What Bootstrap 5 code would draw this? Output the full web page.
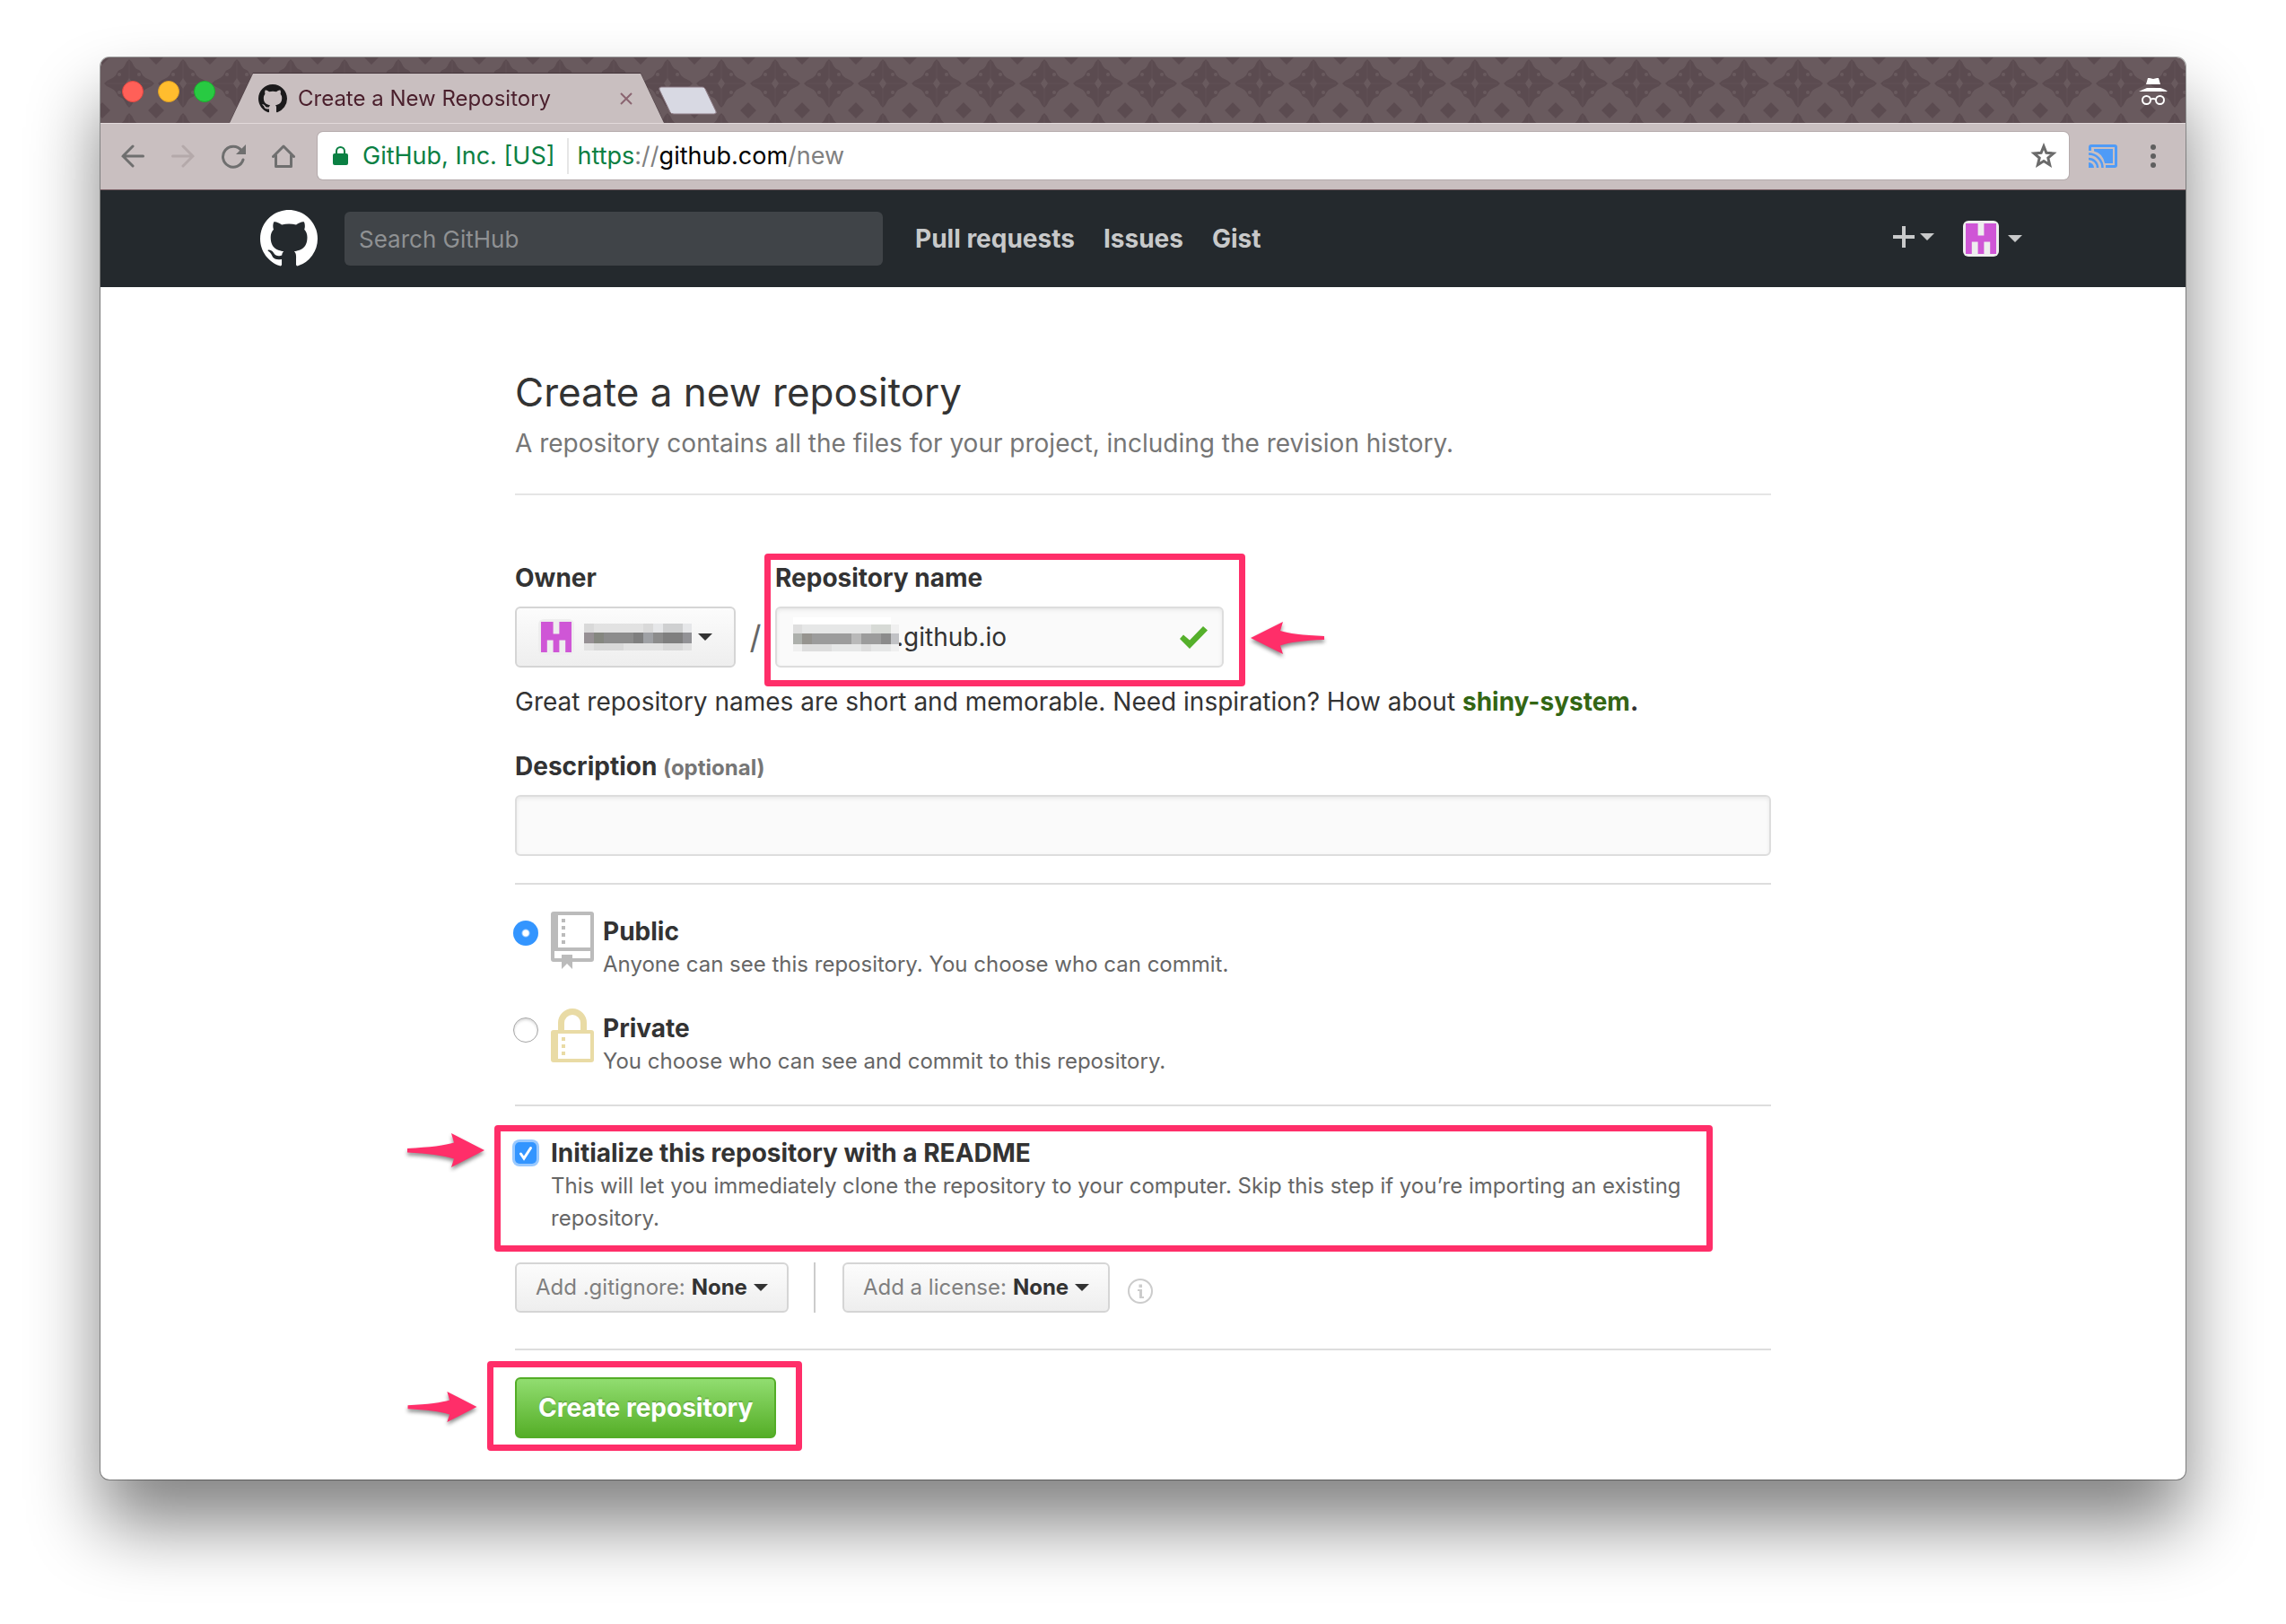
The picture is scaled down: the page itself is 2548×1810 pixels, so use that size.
<!DOCTYPE html>
<html lang="en">
<head>
<meta charset="utf-8">
<meta name="viewport" content="width=device-width, initial-scale=1">
<title>Create a New Repository</title>
<link href="https://cdn.jsdelivr.net/npm/bootstrap@5.3.0/dist/css/bootstrap.min.css" rel="stylesheet">
<style>
  :root { --pink: #ff2e69; --ink: #333; --chrome: #c9bfc0; }
  body { font-family: Inter, "Liberation Sans", sans-serif; font-size: 28px; line-height: 42px; color: var(--ink); background: #fff; }
  svg { display: block; flex: none; }
  .desktop { padding: 64px 112px 100px; }

  /* browser window */
  .window { border-radius: 10px; overflow: hidden; background: #fff; box-shadow: 0 0 0 1px rgba(0,0,0,.35), 0 50px 80px rgba(0,0,0,.49); }
  .titlebar { height: 73px; padding: 0 20px 0 24px; background: #695a5e; }
  .theme { z-index: 0; }
  .titlebar > :not(.theme) { position: relative; }
  .lights { gap: 16px; margin-bottom: 23px; }
  .light { width: 24px; height: 24px; padding: 0; border-radius: 50%; border: 1px solid; }
  .light-close { background: #ff6058; border-color: #e14640; }
  .light-min { background: #ffbd2e; border-color: #dfa023; }
  .light-max { background: #28ca42; border-color: #1bac2c; }
  .tab-shell { width: 484px; margin-left: 16px; filter: drop-shadow(0 -1px 0 #43343a); }
  .tab-face { height: 55px; padding: 0 35px 0 32px; gap: 12px; background: var(--chrome); clip-path: polygon(26px 0, calc(100% - 26px) 0, 100% 100%, 0 100%); font-size: 24px; color: #4a1f2c; }
  .new-tab { margin: 0 0 9px -6px; }
  .incognito { margin-bottom: 20px; }
  .bare { padding: 0; border: 0; background: none; color: inherit; }
  .toolbar { padding: 9px 33px 11px 23px; gap: 30px; background: var(--chrome); border-top: 1px solid #e2dadb; border-bottom: 1px solid #7d6168; color: #6b6b6b; }
  .omnibox { height: 53px; margin: 0 -8px 0 -5px; padding: 0 13px 0 17px; background: #fff; border-radius: 6px; box-shadow: 0 0 0 1px #b5abac; color: #808080; font-size: 27px; }
  .secure { color: #0b8043; }
  .omni-rule { width: 2px; height: 40px; margin: 0 10px 0 13px; background: #e6e6e6; }
  .menu-dots { padding-left: 7px; }

  /* site header */
  .site-header { background: #24292d; height: 108px; color: #c8c9ca; }
  .site-inner { max-width: 1968px; padding-right: 4px; }
  .search-box { width: 600px; height: 60px; margin-left: 30px; padding: 0 16px; border: 0; border-radius: 6px; background: #404448; color: #fff; font-size: 26px; }
  .search-box::placeholder { color: #8f9193; opacity: 1; }
  .site-nav { margin-left: 36px; gap: 32px; }
  .site-nav a { color: #c8c9ca; font-weight: 700; text-decoration: none; }
  .tri { width: 0; height: 0; border: 8px solid transparent; border-top-color: currentColor; border-bottom: 0; }
  .add-menu { gap: 6px; }
  .profile-menu { gap: 10px; margin-left: 32px; }

  /* form */
  .sheet { max-width: 1400px; padding: 92px 0 46px; }
  h1 { font-size: 44px; line-height: 50px; font-weight: 400; margin: 0 0 11px; }
  .sub { color: #767676; }
  .rule { margin: 30px 0; border: 0; border-top: 2px solid #ddd; opacity: 1; }
  .rule-head { margin: 35px 0 71px; border-top-color: #e5e5e5; }
  .rule-last { margin-top: 40px; }
  .caption { display: block; font-weight: 700; }
  .caption + * { margin-top: 11px; }
  .optional { font-size: 24px; line-height: 24px; }
  .hint { margin: 17px 0 30px; }
  .hint a { color: #336614; text-decoration: none; }
  .field { height: 68px; border: 2px solid #ddd; border-radius: 6px; background: #fafafa; box-shadow: inset 0 2px 4px rgba(0,0,0,.075); font-size: 28px; color: var(--ink); }
  .repo-name { width: 500px; }
  .repo-name .field { padding: 0 70px 0 133px; }
  .mask { left: 20px; top: 12px; }
  .valid { right: 18px; top: 22px; }
  .soft-btn { height: 56px; padding: 0 21px; border: 2px solid #d5d5d5; border-radius: 6px; background: linear-gradient(#fcfcfc, #eee); color: var(--ink); font-size: 24px; gap: 7px; }
  .soft-btn .key { color: #7f7f7f; }
  .owner-btn { height: 68px; padding: 0 24px; }
  .owner-mask { margin-left: 4px; }
  .avatar { border-radius: 6px; background: #eee; }
  .slash { width: 44px; height: 68px; line-height: 68px; font-size: 36px; color: #666; text-align: center; }
  .choice { line-height: 38px; }
  .choice + .choice, .extras { margin-top: 31px; }
  .choice-text { padding-top: 3px; }
  .choice .note { margin: 0; font-size: 24px; line-height: 36px; color: #666; }
  .pick { appearance: none; flex: none; margin: 10px 0 0; }
  .pick-radio { width: 28px; height: 28px; margin-left: -2px; border-radius: 50%; border: 1px solid #a5a5a5; background: #fff; box-shadow: inset 0 2px 3px rgba(0,0,0,.15); }
  .pick-radio:checked { border: 0; background: radial-gradient(circle, #fff 3px, #3395ff 5px); box-shadow: none; }
  .pick-check { width: 24px; height: 24px; border-radius: 5px; background: #3395ff; box-shadow: 0 0 0 3px #99c9ff; }
  .choice-icon { margin: 0 10px 0 14px; width: 48px; height: 64px; }
  .split { width: 2px; height: 56px; margin: 0 30px 0 28px; background: #ccc; }
  .info { margin: 8px 0 0 20px; }
  .go-btn { height: 68px; padding: 0 24px; border: 2px solid #53ad27; border-radius: 6px; background: linear-gradient(#91dd70, #55ae27); color: #fff; font-weight: 700; text-shadow: 0 -2px 0 rgba(0,0,0,.15); }

  /* walkthrough marks laid over the form */
  .frame { border: 7px solid var(--pink); border-radius: 4px; pointer-events: none; }
  .frame-name { inset: -6px -24px -21px -12px; margin: 0; }
  .frame-readme { inset: -9px 65px -19px -23px; }
  .frame-go { inset: -18px -29px -14px -31px; }
  .arrow { fill: var(--pink); filter: drop-shadow(0 3px 2px rgba(0,0,0,.45)); }
  .arrow-name { left: calc(100% + 30px); bottom: 15px; }
  .arrow-readme { left: -120px; top: 0; }
  .arrow-go { left: -120px; top: 16px; }
</style>
<script src="https://cdn.jsdelivr.net/npm/bootstrap@5.3.0/dist/js/bootstrap.bundle.min.js"></script>
</head>
<body>
<svg class="d-none" aria-hidden="true">
  <symbol id="octocat" viewBox="0 0 16 16"><path d="M8 0C3.58 0 0 3.58 0 8c0 3.54 2.29 6.53 5.47 7.59.4.07.55-.17.55-.38 0-.19-.01-.82-.01-1.49-2.01.37-2.53-.49-2.69-.94-.09-.23-.48-.94-.82-1.13-.28-.15-.68-.52-.01-.53.63-.01 1.08.58 1.23.82.72 1.21 1.87.87 2.33.66.07-.52.28-.87.51-1.07-1.78-.2-3.64-.89-3.64-3.95 0-.87.31-1.59.82-2.15-.08-.2-.36-1.02.08-2.12 0 0 .67-.21 2.2.82.64-.18 1.32-.27 2-.27.68 0 1.36.09 2 .27 1.53-1.04 2.2-.82 2.2-.82.44 1.1.16 1.92.08 2.12.51.56.82 1.27.82 2.15 0 3.07-1.87 3.75-3.65 3.95.29.25.54.73.54 1.48 0 1.07-.01 1.93-.01 2.2 0 .21.15.46.55.38A8.013 8.013 0 0 0 16 8c0-4.42-3.58-8-8-8z"/></symbol>
  <symbol id="identicon" viewBox="-3 -3 40 40"><path fill="#cf56d6" transform="scale(6.8)" d="M0 0h2v2h1V0h2v5H4V3H3v2H2V3H1v2H0z"/></symbol>
  <symbol id="arrow-right" viewBox="0 0 86 38"><path d="M86 19 49 0 52 10.500Q38 15 0 17V21.500Q34 23 52 28.500L49 38Z"/></symbol>
</svg>

<div class="desktop min-vh-100">
  <div class="window">
    <div class="titlebar d-flex align-items-end position-relative">
      <svg class="theme position-absolute top-0 start-0 w-100 h-100" aria-hidden="true">
        <defs><pattern id="tile" width="60" height="60" patternUnits="userSpaceOnUse" patternTransform="translate(2 -1)">
          <path fill="#5b4b50" d="M30 3Q33 5 35 10 37 14 41 15 43 16 44 19 46 23 51 25 56 27 58 30 56 33 51 35 46 37 44 41 43 44 41 45 37 46 35 50 33 55 30 57 27 55 25 50 23 46 19 45 17 44 16 41 14 37 9 35 4 33 2 30 4 27 9 25 14 23 16 19 17 16 19 15 23 14 25 10 27 5 30 3ZM0-9 9 0 0 9-9 0ZM60-9 69 0 60 9 51 0ZM0 51 9 60 0 69-9 60ZM60 51 69 60 60 69 51 60Z"/>
          <path fill="none" stroke="#615156" d="M30 5V55M5 30H55"/>
          <path fill="#695a5e" d="M30 24 34 30 30 36 26 30Z"/>
          <g fill="#695a5e"><circle cx="19" cy="20" r="2"/><circle cx="41" cy="20" r="2"/><circle cx="19" cy="40" r="2"/><circle cx="41" cy="40" r="2"/></g>
        </pattern></defs>
        <rect width="100%" height="100%" fill="url(#tile)"/>
      </svg>
      <div class="lights d-flex">
        <button class="light light-close" aria-label="Close window"></button>
        <button class="light light-min" aria-label="Minimise window"></button>
        <button class="light light-max" aria-label="Zoom window"></button>
      </div>
      <div class="tab-shell">
        <div class="tab-face d-flex align-items-center">
          <svg width="32" height="32" fill="#1b1a1b"><use href="#octocat"/></svg>
          <span>Create a New Repository</span>
          <button class="bare ms-auto" aria-label="Close tab"><svg width="14" height="14" fill="none" stroke="#8a6470" stroke-width="2"><path d="M1 1 13 13M13 1 1 13"/></svg></button>
        </div>
      </div>
      <button class="bare new-tab" aria-label="New tab"><svg width="66" height="32"><path fill="#d8d9e3" stroke="#8d7b84" d="M3 1H49Q51 1 52 3L64 28Q65 31 62 31H17Q14 31 13 29L1 4Q0 1 3 1Z"/></svg></button>
      <svg class="incognito ms-auto" width="32" height="30" viewBox="0 0 32 30" fill="#fff"><path d="M10 0H12L16 1 20 0H22L24 7H8ZM9 11H24Q30 13 32 15H0Q4 13 9 11Z"/><g fill="none" stroke="#fff" stroke-width="2"><circle cx="8.500" cy="24.500" r="4.500"/><circle cx="23.500" cy="24.500" r="4.500"/><path d="M13 24Q16 22 19 24"/></g></svg>
    </div>

    <div class="toolbar d-flex align-items-center">
      <button class="bare" aria-label="Back"><svg width="26" height="26" fill="none" stroke="#6f6f6f" stroke-width="3" stroke-linecap="round"><path d="M24.500 13H2M13 2 2 13 13 24"/></svg></button>
      <button class="bare" aria-label="Forward"><svg width="26" height="26" fill="none" stroke="#b4a9aa" stroke-width="3" stroke-linecap="round"><path d="M1.500 13H24M13 2 24 13 13 24"/></svg></button>
      <button class="bare" aria-label="Reload"><svg class="overflow-visible" width="26" height="26" fill="none" stroke="#6f6f6f" stroke-width="3"><path d="M22 6.500A11.500 11.500 0 1 0 24 17" stroke-linecap="round"/><path fill="#6f6f6f" stroke="none" d="M27 0V11H16Z"/></svg></button>
      <button class="bare" aria-label="Home"><svg width="26" height="26" fill="none" stroke="#6f6f6f" stroke-width="3"><path d="M1.500 13.500 13 2 24.500 13.500M4.500 12V24.500H21.500V12" stroke-linecap="round" stroke-linejoin="round"/></svg></button>
      <div class="omnibox d-flex align-items-center flex-grow-1">
        <svg width="17" height="21" viewBox="0 0 17 21"><rect y="8" width="17" height="13" rx="2" fill="#0b8043"/><path d="M4 9V5.500a4.500 4.500 0 0 1 9 0V9" fill="none" stroke="#0b8043" stroke-width="2"/></svg>
        <span class="secure ms-3">GitHub, Inc. [US]</span>
        <span class="omni-rule"></span>
        <span role="textbox" aria-label="Address"><span class="secure">https</span>://<span class="text-black">github.com</span>/new</span>
        <button class="bare ms-auto" aria-label="Bookmark this page"><svg width="30" height="30" viewBox="0 0 30 30" fill="none" stroke="#6b6b6b" stroke-width="3"><path d="M15 4 17.900 11.300 25.800 11.900 19.800 17 21.700 24.700 15 20.500 8.300 24.700 10.200 17 4.200 11.900 12.100 11.300Z"/></svg></button>
      </div>
      <svg width="32" height="26" viewBox="0 0 32 26" fill="#4f9bf7" role="img" aria-label="Cast"><path d="M3 0H29Q32 0 32 3V23Q32 26 29 26H19V23H29V3H3V7H0V3Q0 0 3 0Z"/><path d="M6 5H27V21H18Q16 10 6 7.500Z"/><path fill="none" stroke="#4f9bf7" stroke-width="2.500" d="M0 10.500A15.500 15.500 0 0 1 15.500 26M0 16A10 10 0 0 1 10 26"/><path d="M0 20A6 6 0 0 1 6 26H0Z"/></svg>
      <button class="bare menu-dots" aria-label="Menu"><svg width="6" height="26" fill="#5f5f5f"><circle cx="3" cy="3" r="3"/><circle cx="3" cy="13" r="3"/><circle cx="3" cy="23" r="3"/></svg></button>
    </div>

    <header class="site-header d-flex">
      <div class="site-inner d-flex align-items-center w-100 mx-auto">
        <a href="#" aria-label="Homepage"><svg width="64" height="64" fill="#fff"><use href="#octocat"/></svg></a>
        <input class="search-box" type="search" placeholder="Search GitHub" aria-label="Search GitHub">
        <nav class="site-nav d-flex">
          <a href="#">Pull requests</a>
          <a href="#">Issues</a>
          <a href="#">Gist</a>
        </nav>
        <button class="bare add-menu ms-auto d-flex align-items-center pb-1" aria-label="Create new"><svg width="24" height="24" stroke="#c8c9ca" stroke-width="4"><path d="M0 12H24M12 0V24"/></svg><span class="tri"></span></button>
        <button class="bare profile-menu d-flex align-items-center" aria-label="Profile"><svg class="avatar" width="40" height="40"><use href="#identicon"/></svg><span class="tri"></span></button>
      </div>
    </header>

    <main class="sheet mx-auto">
      <h1>Create a new repository</h1>
      <p class="sub m-0">A repository contains all the files for your project, including the revision history.</p>
      <hr class="rule rule-head">

      <form>
        <div class="d-flex align-items-end">
          <div>
            <label class="caption" for="owner">Owner</label>
            <button class="soft-btn owner-btn d-flex align-items-center" type="button" id="owner">
              <svg class="avatar" width="40" height="40"><use href="#identicon"/></svg>
              <svg class="owner-mask" width="120" height="30" viewBox="0 0 120 30" shape-rendering="crispEdges" aria-hidden="true">
                <path fill="#e2e2e2" d="M0 0H120V30H0Z"/>
                <path fill="#d9d9d9" d="M0 0H11V10H0ZM66 0H77V10H66ZM11 22H44V30H11ZM88 22H110V30H88Z"/>
                <path fill="#cfd0d1" d="M88 0H110V10H88Z"/><path fill="#e6e7e9" d="M77 0H88V10H77ZM110 0H120V10H110Z"/>
                <path fill="#8c8c8c" d="M0 10H120V22H0Z"/><path fill="#969094" d="M0 10H11V22H0Z"/><path fill="#858780" d="M11 10H22V22H11Z"/><path fill="#7f7f7f" d="M55 10H66V22H55ZM88 10H110V22H88Z"/><path fill="#9fa1a5" d="M66 10H77V22H66Z"/><path fill="#929296" d="M110 10H120V22H110Z"/>
              </svg>
              <span class="tri"></span>
            </button>
          </div>
          <div class="slash">/</div>
          <div class="repo-name position-relative">
            <label class="caption" for="repo">Repository name</label>
            <div class="position-relative">
              <input class="field d-block w-100" id="repo" type="text" value=".github.io">
              <svg class="mask position-absolute" width="118" height="38" viewBox="0 0 118 38" shape-rendering="crispEdges" aria-hidden="true">
                <path fill="#fff" d="M0 0H109V8H0Z"/><path fill="#e6e7e7" d="M0 8H109V38H0Z"/>
                <path fill="#dedede" d="M0 8H10V18H0ZM10 30H43V38H10ZM76 30H87V38H76Z"/><path fill="#d7dad6" d="M87 8H109V18H87Z"/>
                <path fill="#f0f0f0" d="M0 30H10V38H0ZM109 8H118V38H109Z"/>
                <path fill="#9c9c9c" d="M0 18H109V30H0Z"/><path fill="#adb0ac" d="M0 18H10V30H0Z"/><path fill="#96948f" d="M10 18H21V30H10Z"/><path fill="#b9b9b9" d="M65 18H76V30H65Z"/><path fill="#8b8b8b" d="M98 18H109V30H98Z"/><path fill="#c1c2c5" d="M109 18H118V30H109Z"/>
              </svg>
              <svg class="valid position-absolute" width="31" height="25" viewBox="0 0 31 25" fill="#55b02b"><path d="M26 0 31 4.500 11 25 0 14 4 9.500 11 15.500Z"/></svg>
            </div>
            <div class="frame frame-name position-absolute"></div>
            <svg class="arrow arrow-name position-absolute overflow-visible" width="82" height="36" viewBox="0 0 82 36"><path d="M0 18 36 0 33 10Q46 14.500 82 16V20Q48 21 33 26.500L36 36Z"/></svg>
          </div>
        </div>
        <p class="hint">Great repository names are short and memorable. Need inspiration? How about <strong><a href="#">shiny-system</a>.</strong></p>

        <label class="caption" for="desc">Description <span class="sub optional">(optional)</span></label>
        <input class="field d-block w-100 px-3" id="desc" type="text">
        <hr class="rule">

        <div class="choice d-flex align-items-start">
          <input class="pick pick-radio" type="radio" name="visibility" id="public" checked>
          <svg class="choice-icon" viewBox="0 0 48 64" fill="#bbb"><path fill-rule="evenodd" d="M3 0H45Q48 0 48 3V53Q48 56 45 56H24V64L18 58 12 64V56H3Q0 56 0 53V3Q0 0 3 0ZM8 4V40H44V4ZM4 44V52H12V48H24V52H44V44Z"/><path d="M12 8h4v4h-4zM12 16h4v4h-4zM12 24h4v4h-4zM12 32h4v4h-4z"/></svg>
          <div class="choice-text">
            <label class="caption" for="public">Public</label>
            <p class="note">Anyone can see this repository. You choose who can commit.</p>
          </div>
        </div>
        <div class="choice d-flex align-items-start">
          <input class="pick pick-radio" type="radio" name="visibility" id="private">
          <svg class="choice-icon" viewBox="0 0 48 64" fill="#e9dba5"><path fill-rule="evenodd" d="M8 24V16A16 16 0 0 1 40 16V24H45Q48 24 48 27V57Q48 60 45 60H3Q0 60 0 57V27Q0 24 3 24ZM15 24H33V16A9 9 0 0 0 15 16ZM8 28V56H44V28Z"/><path d="M12 32h4v4h-4zM12 40h4v4h-4zM12 48h4v4h-4z"/></svg>
          <div class="choice-text">
            <label class="caption" for="private">Private</label>
            <p class="note">You choose who can see and commit to this repository.</p>
          </div>
        </div>
        <hr class="rule">

        <div class="choice d-flex align-items-start position-relative">
          <div class="position-relative">
            <input class="pick pick-check d-block" type="checkbox" id="readme" checked>
            <svg class="position-absolute bottom-0 start-0 pe-none" width="24" height="24" fill="none" stroke="#fff" stroke-width="3" stroke-linecap="round"><path d="M6.500 13 10 18 17.500 6.500"/></svg>
          </div>
          <div class="choice-text ms-3">
            <label class="caption" for="readme">Initialize this repository with a README</label>
            <p class="note">This will let you immediately clone the repository to your computer. Skip this step if you’re importing an existing repository.</p>
          </div>
          <div class="frame frame-readme position-absolute"></div>
          <svg class="arrow arrow-readme position-absolute overflow-visible" width="86" height="38"><use href="#arrow-right"/></svg>
        </div>

        <div class="extras d-flex align-items-center">
          <button class="soft-btn d-flex align-items-center" type="button"><span class="key">Add .gitignore:</span><span class="fw-bold">None</span><span class="tri"></span></button>
          <span class="split"></span>
          <button class="soft-btn d-flex align-items-center" type="button"><span class="key">Add a license:</span><span class="fw-bold">None</span><span class="tri"></span></button>
          <svg class="info" width="28" height="28" fill="none" stroke="#ccc" stroke-width="2" role="img" aria-label="License help"><circle cx="14" cy="14" r="13"/><path fill="#ccc" stroke="none" d="M12.500 6.500h3.500v3.500h-3.500zM11 12h5v8h2v2h-5v-8h-2z"/></svg>
        </div>
        <hr class="rule rule-last">

        <div class="d-inline-block position-relative align-top">
          <button class="go-btn d-block" type="button">Create repository</button>
          <div class="frame frame-go position-absolute"></div>
          <svg class="arrow arrow-go position-absolute overflow-visible" width="78" height="34"><use href="#arrow-right"/></svg>
        </div>
      </form>
    </main>
  </div>
</div>
</body>
</html>
